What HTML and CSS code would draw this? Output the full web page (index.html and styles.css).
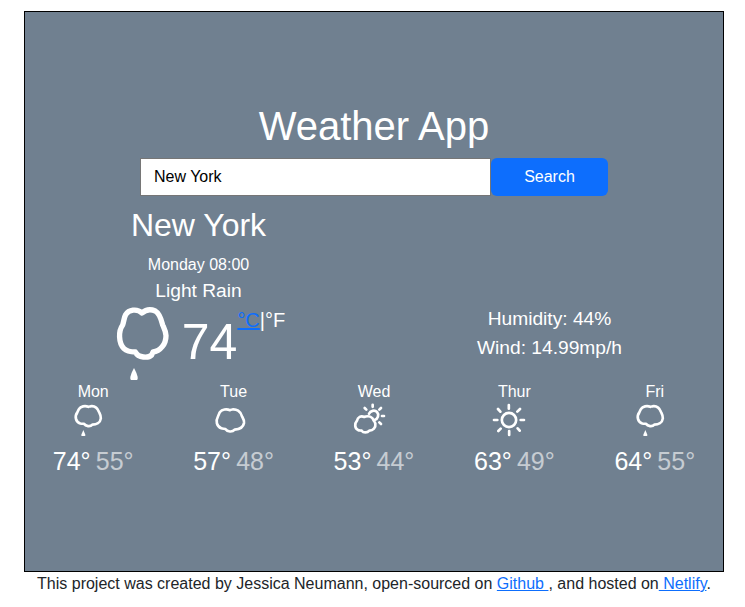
FILE: index.html
```html
<!DOCTYPE html>
<html lang="en">
<head>
<meta charset="utf-8">
<title>Weather App</title>
<link rel="stylesheet" href="styles.css">
</head>
<body>
<svg class="defs" aria-hidden="true">
  <symbol id="rain" viewBox="93 81 108 108">
    <path class="line" d="M145 95.500C135 91 122 94 117 102C115 105 114 108 112 112C103 124 107 141 121 145.500C125 146.500 128 146 132 146.500C137 154 151 156 157 149C169 149 181 143 182.500 130C183 121 180 117 177 111C172 98 163 92 151 94C148 94 147 95 145 95.500Z"/>
    <path class="solid" d="M130 165L136 179Q137 183 134 183H126Q123 183 124 179Z"/>
  </symbol>
  <symbol id="cloud" viewBox="93 81 108 108">
    <path class="line" d="M147 105.500C137 101 123 103 117 111C114 115 114 119 111 124C103 138 107 155 121 160C125 161.500 129 161 133 162C139 171 154 172 161 164C173 163 187 157 189 144C190 135 187 131 183 124C179 109 166 101 153 103.500C150 104 149 105 147 105.500Z"/>
  </symbol>
  <symbol id="partly" viewBox="96 81 108 108">
    <path class="line" d="M133 126C123 121 113 126 111 137C103 146 104 161 114 165C118 167 121 166 125 167C130 174 142 174 148 167C159 167 168 158 166 146C165 142 164 140 161 137C158 126 147 122 137 124.500C135 125 134 125.500 133 126ZM147 116C151 107 164 104 171 111C178 119 174 132 164 135"/>
    <path class="line" d="M158 89.500V95.500M134 99L139 104M183 99L178 104M186 123H192M178 142L183 147"/>
  </symbol>
  <symbol id="sun" viewBox="96 81 108 108">
    <circle class="line" cx="147" cy="135" r="21.500"/>
    <path class="line" d="M146.500 90V101M147.500 168V180M102 135H112M182 135H192M114 102L121 110M180 102L172 110M115 168L122 161M173 160L179 167"/>
  </symbol>
</svg>
<main class="card">
  <h1>Weather App</h1>
  <form class="search">
    <input type="text" value="New York" aria-label="City">
    <button type="button">Search</button>
  </form>
  <section class="current">
    <div class="summary">
      <h2>New York</h2>
      <div class="date">Monday 08:00</div>
      <div class="condition">Light Rain</div>
      <div class="now">
        <svg class="now-icon" viewBox="43 24 180 234">
          <path class="line" d="M124 54C108 39 84 45 75 59C70 68 70 78 66 90C53 108 53 143 70 161C80 171 93 171 104 171C113 189 143 190 153 180L157 171C179 169 196 147 196 122C195 108 190 99 186 90C182 75 178 56 164 48C150 42 135 44 124 54Z"/>
          <path class="solid" d="M100 219Q109 235 111 246Q112 253 109 255H91Q88 253 89 246Q91 235 100 219Z"/>
        </svg>
        <span class="degrees">74</span>
        <span class="units"><a href="#">°C</a>|°F</span>
      </div>
    </div>
    <div class="details">
      <div>Humidity: 44%</div>
      <div>Wind: 14.99mp/h</div>
    </div>
  </section>
  <section class="forecast">
    <div class="day"><div>Mon</div><svg><use href="#rain"/></svg><div class="temps"><span>74°</span> <span class="low">55°</span></div></div>
    <div class="day"><div>Tue</div><svg><use href="#cloud"/></svg><div class="temps"><span>57°</span> <span class="low">48°</span></div></div>
    <div class="day"><div>Wed</div><svg><use href="#partly"/></svg><div class="temps"><span>53°</span> <span class="low">44°</span></div></div>
    <div class="day"><div>Thur</div><svg><use href="#sun"/></svg><div class="temps"><span>63°</span> <span class="low">49°</span></div></div>
    <div class="day"><div>Fri</div><svg><use href="#rain"/></svg><div class="temps"><span>64°</span> <span class="low">55°</span></div></div>
  </section>
</main>
<footer>This project was created by Jessica Neumann, open-sourced on <a href="#">Github </a>, and hosted on<a href="#"> Netlify</a>.</footer>
</body>
</html>
```
FILE: styles.css
```css
* { box-sizing: border-box; }
body {
  margin: 0;
  padding: 11px 21px 0 24px;
  font: 16px/24px "Liberation Sans", Arial, sans-serif;
  color: #212529;
  background: #fff;
}
a { color: #0d6efd; }
.defs { display: none; }
.card {
  height: 561px;
  padding-top: 90px;
  border: 1px solid #000;
  background: #708090;
  color: #fff;
}
h1, h2 { margin: 0; font-weight: 400; text-align: center; }
h1 { font-size: 40px; line-height: 48px; }
.search { display: flex; width: 468px; margin: 8px auto 0; }
.search input {
  flex: 1;
  min-width: 0;
  height: 38px;
  padding: 0 13px;
  border: 1px solid #767676;
  border-radius: 0;
  background: #fff;
  color: #000;
  font: inherit;
}
.search button {
  width: 117px;
  height: 38px;
  padding: 0;
  border: 0;
  border-radius: 6px;
  background: #0d6efd;
  color: #fff;
  font: inherit;
}
.current {
  display: grid;
  grid-template-columns: 1fr 1fr;
  margin: 10px -2px 0;
  height: 174px;
  text-align: center;
}
h2 { font-size: 32px; line-height: 38px; }
.date { margin-top: 9px; }
.condition { font-size: 19.2px; line-height: 28px; }
.now { display: flex; justify-content: center; height: 76px; margin-top: -1px; }
.now-icon { width: 60px; height: 78px; margin-left: 3px; margin-top: -1px; }
.degrees { margin: 0 0 0 7px; font-size: 50px; line-height: 76px; }
.units { font-size: 20px; line-height: 32px; }
.details { padding-top: 99px; font-size: 19.2px; line-height: 28.8px; }
.forecast {
  display: grid;
  grid-template-columns: repeat(5, 1fr);
  margin: 0 -2px;
  text-align: center;
}
.day svg { display: block; width: 36px; height: 36px; margin: -2px auto 0; transform: translateX(-4px); }
.temps { margin-top: 8px; line-height: 30px; }
.temps span { font-size: 25px; }
.temps .low { margin-left: .7px; opacity: .6; }
.line { fill: none; stroke: #fff; stroke-width: 8; stroke-linecap: round; stroke-linejoin: round; }
.now-icon .line { stroke-width: 16; }
.solid { fill: #fff; }
footer { text-align: center; white-space: nowrap; }
```
